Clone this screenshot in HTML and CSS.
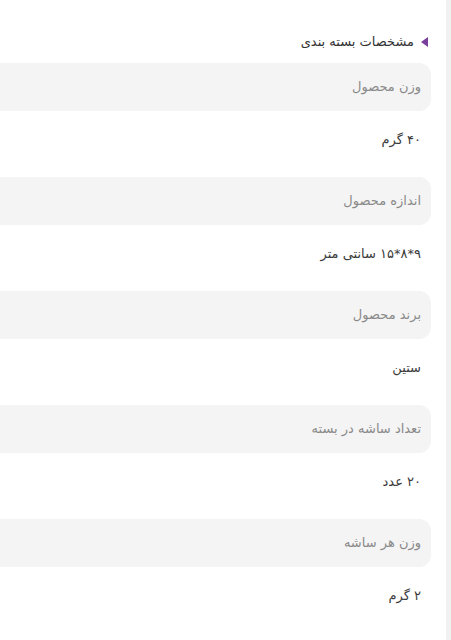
FILE: index.html
```html
<!DOCTYPE html>
<html lang="fa" dir="rtl">
<head>
<meta charset="utf-8">
<link rel="stylesheet" href="styles.css">
</head>
<body>
<div class="page">
  <aside class="scrollbar"></aside>
  <main class="content">
    <h2 class="title"><span class="marker"></span>مشخصات بسته بندی</h2>
    <div class="spec">
      <div class="label">وزن محصول</div>
      <div class="value">۴۰ گرم</div>
    </div>
    <div class="spec">
      <div class="label">اندازه محصول</div>
      <div class="value">۹*۸*۱۵ سانتی متر</div>
    </div>
    <div class="spec">
      <div class="label">برند محصول</div>
      <div class="value">ستین</div>
    </div>
    <div class="spec">
      <div class="label">تعداد ساشه در بسته</div>
      <div class="value">۲۰ عدد</div>
    </div>
    <div class="spec">
      <div class="label">وزن هر ساشه</div>
      <div class="value">۲ گرم</div>
    </div>
  </main>
</div>
</body>
</html>
```
FILE: styles.css
```css
html, body {
  margin: 0;
  padding: 0;
  background: #ffffff;
}
body {
  font-family: "DejaVu Sans", "Noto Sans", sans-serif;
  overflow: hidden;
}
.page {
  display: flex;
  flex-direction: row;
  height: 640px;
}
.scrollbar {
  width: 5px;
  flex: 0 0 5px;
  background: #f1f1f1;
}
.content {
  flex: 1;
  padding-right: 15px;
  padding-top: 36px;
}
.title {
  margin: 0 3px 15px 0;
  font-size: 13px;
  font-weight: normal;
  color: #333;
  line-height: 22px;
  height: 12px;
  display: flex;
  align-items: center;
  gap: 7px;
}
.marker {
  width: 0;
  height: 0;
  border-top: 5px solid transparent;
  border-bottom: 5px solid transparent;
  border-right: 7px solid #7a3f9d;
}
.label {
  background: #f4f4f4;
  border-radius: 0 12px 12px 0;
  height: 48px;
  line-height: 47px;
  padding-right: 10px;
  font-size: 13px;
  color: #8a8a8a;
}
.value {
  height: 66px;
  line-height: 57px;
  padding-right: 10px;
  font-size: 13px;
  color: #3a3a3a;
}
```
